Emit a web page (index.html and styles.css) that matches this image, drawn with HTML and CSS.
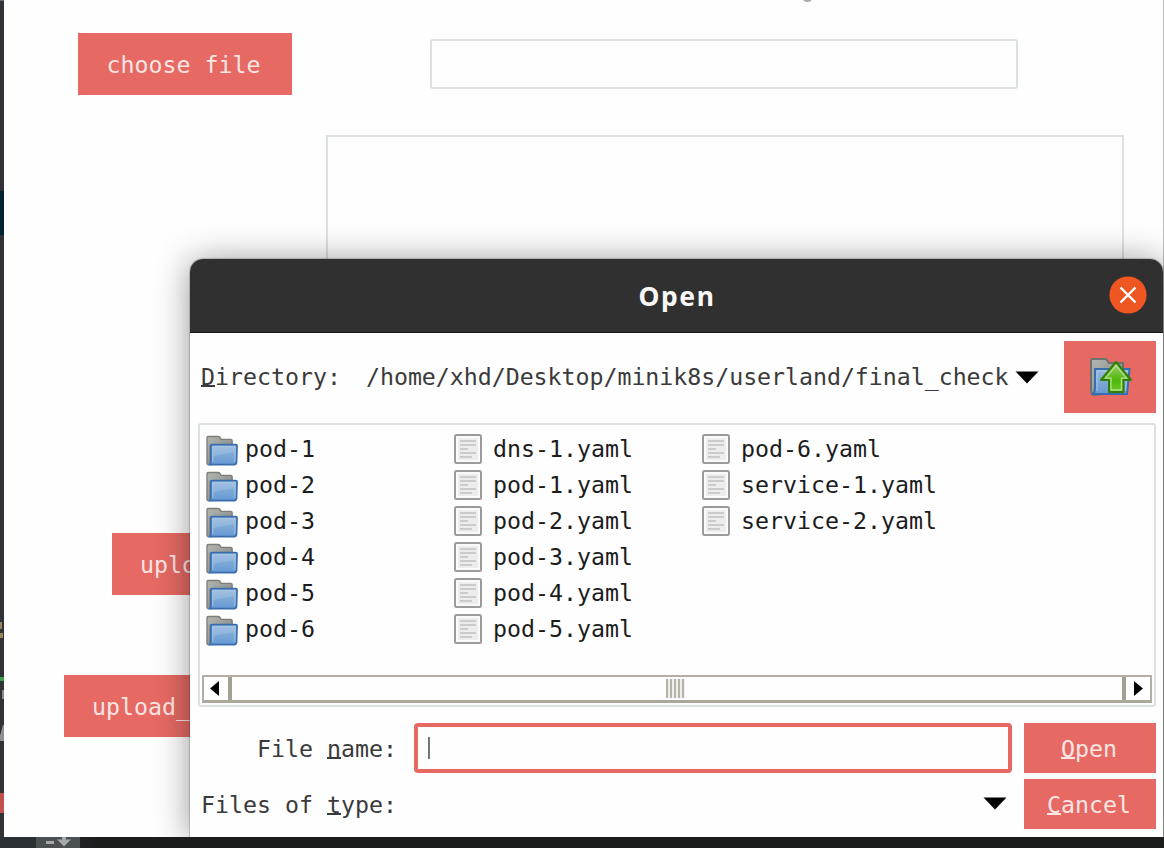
FILE: index.html
```html
<!DOCTYPE html>
<html lang="en">
<head>
<meta charset="utf-8">
<title>Open</title>
<link rel="stylesheet" href="styles.css">
</head>
<body>
<svg class="defs" width="0" height="0">
  <defs>
    <linearGradient id="blue" x1="0" y1="0" x2="0" y2="1"><stop offset="0" stop-color="#96b9dc"/><stop offset="1" stop-color="#6599d2"/></linearGradient>
    <linearGradient id="grey" x1="0" y1="0" x2="1" y2="1"><stop offset="0" stop-color="#b5b8b2"/><stop offset="1" stop-color="#7c7f79"/></linearGradient>
    <linearGradient id="green" x1="0" y1="0" x2="0" y2="1"><stop offset="0" stop-color="#a7d37b"/><stop offset=".6" stop-color="#4fb60c"/><stop offset="1" stop-color="#63cd1c"/></linearGradient>
    <symbol id="folder" viewBox="0 0 34 32">
      <path d="M1.5 29V3Q1.500 1.500 3 1.500H13Q15 1.500 16 4.500H26Q27.500 4.500 27.500 6V28L6 30.500H3Q1.500 30.500 1.500 29Z" fill="url(#grey)" stroke="#7b7f78" stroke-width="1.400"/>
      <path d="M5 10V29" stroke="#666b66" stroke-width="1.600"/>
      <path d="M5.500 11Q5.500 10 6.500 10H31.500Q32.500 10 32.500 11L32 28Q31.700 30.500 29.500 30.500H4.500Q5.500 29 5.500 26Z" fill="url(#blue)" stroke="#386eae" stroke-width="1.800"/>
      <path d="M7.500 27.500V12H30.700L30.200 27.500" fill="none" stroke="#a8c6e6" stroke-width="1"/>
      <path d="M8 12H30V18Q20 18.500 8 22Z" fill="#fff" opacity=".13"/>
    </symbol>
    <symbol id="doc" viewBox="0 0 28 30">
      <rect x="1" y="1" width="26" height="28" rx="1.500" fill="#fafafa" stroke="#9b9b9b" stroke-width="2"/>
      <rect x="4" y="4" width="20" height="22" fill="#ecedec"/>
      <path d="M6 7H22M6 11H22M6 15H14M6 19H22M6 23H18" stroke="#c9ccc9" stroke-width="1.800"/>
    </symbol>
  </defs>
</svg>

<div class="desktop">
  <div class="editor-edge"></div>
  <main class="app">
    <span class="heading-tail"></span>
    <div class="row-choose">
      <button class="btn choose">choose file</button>
      <div class="field"></div>
    </div>
    <div class="preview"></div>
    <button class="btn upload">upload</button>
    <button class="btn upload-all">upload_</button>
  </main>
  <div class="taskbar"><div class="task"><svg width="44" height="11" viewBox="0 0 44 11"><path d="M10 5.500H18" stroke="#a5a8a8" stroke-width="3"/><path d="M21 2.500H35L28 9.500ZM26 0H30V3H26Z" fill="#a5a8a8"/></svg></div></div>
</div>

<section class="dialog">
  <header class="titlebar">
    <h1>Open</h1>
    <svg class="close" width="38" height="38" viewBox="0 0 38 38"><circle cx="19" cy="19" r="18.600" fill="#ee5622"/><path d="M11.500 11.500L26.500 26.500M26.500 11.500L11.500 26.500" stroke="#fff" stroke-width="2.400"/></svg>
  </header>

  <div class="directory">
    <label><u>D</u>irectory:</label>
    <span class="path">/home/xhd/Desktop/minik8s/userland/final_check</span>
    <svg class="caret" width="24" height="13" viewBox="0 0 24 13"><path d="M.5 .5H23.500L12 12.500Z"/></svg>
    <button class="up"><svg width="44" height="40" viewBox="0 0 44 40">
      <path d="M2 35V4Q2 2 4 2H17L20 6H34V35L4 38Z" fill="url(#grey)" stroke="#6e726c" stroke-width="2"/>
      <path d="M6 12H40.500L38 37H4Q6 35 6 31Z" fill="url(#blue)" stroke="#386eae" stroke-width="2"/>
      <path d="M8 34V14H38L36.500 34" fill="none" stroke="#a8c6e6"/>
      <path d="M27 5L42 23H34.500V35H20V23H12Z" fill="url(#green)" stroke="#327d04" stroke-width="2" stroke-linejoin="round"/>
      <path d="M27 8.500L37.500 21.200H32.500V33H22V21.200H16.500Z" fill="none" stroke="#b4df8e" stroke-width="1.300"/>
    </svg></button>
  </div>

  <div class="listing">
    <div class="columns">
      <ul>
        <li><svg class="folder"><use href="#folder"/></svg>pod-1</li>
        <li><svg class="folder"><use href="#folder"/></svg>pod-2</li>
        <li><svg class="folder"><use href="#folder"/></svg>pod-3</li>
        <li><svg class="folder"><use href="#folder"/></svg>pod-4</li>
        <li><svg class="folder"><use href="#folder"/></svg>pod-5</li>
        <li><svg class="folder"><use href="#folder"/></svg>pod-6</li>
      </ul>
      <ul>
        <li><svg class="doc"><use href="#doc"/></svg>dns-1.yaml</li>
        <li><svg class="doc"><use href="#doc"/></svg>pod-1.yaml</li>
        <li><svg class="doc"><use href="#doc"/></svg>pod-2.yaml</li>
        <li><svg class="doc"><use href="#doc"/></svg>pod-3.yaml</li>
        <li><svg class="doc"><use href="#doc"/></svg>pod-4.yaml</li>
        <li><svg class="doc"><use href="#doc"/></svg>pod-5.yaml</li>
      </ul>
      <ul>
        <li><svg class="doc"><use href="#doc"/></svg>pod-6.yaml</li>
        <li><svg class="doc"><use href="#doc"/></svg>service-1.yaml</li>
        <li><svg class="doc"><use href="#doc"/></svg>service-2.yaml</li>
      </ul>
    </div>
    <div class="scrollbar">
      <div class="arrow back"><svg width="9" height="15" viewBox="0 0 9 15"><path d="M9 0V15L0 7.500Z"/></svg></div>
      <div class="thumb"><span class="grip"></span></div>
      <div class="arrow"><svg width="9" height="15" viewBox="0 0 9 15"><path d="M0 0V15L9 7.500Z"/></svg></div>
    </div>
  </div>

  <div class="form">
    <label>File <u>n</u>ame:</label>
    <div class="input"><span class="cursor"></span></div>
    <button class="btn"><u>O</u>pen</button>
    <label>Files of <u>t</u>ype:</label>
    <div class="type"><svg class="caret" width="24" height="13" viewBox="0 0 24 13"><path d="M.5 .5H23.500L12 12.500Z"/></svg></div>
    <button class="btn"><u>C</u>ancel</button>
  </div>
</section>
</body>
</html>
```

FILE: styles.css
```css
* { box-sizing: border-box; }

body {
  margin: 0;
  width: 1164px;
  height: 848px;
  overflow: hidden;
  position: relative;
  background: #1b1c1c;
  color: #3a3a3a;
  font: 23.25px/28px "DejaVu Sans Mono", monospace;
}

.defs { position: absolute; }
svg { display: block; flex: none; }
u { text-decoration: underline 2px; text-underline-offset: 0; text-decoration-skip-ink: none; }

.desktop {
  display: grid;
  grid-template: 837px 11px / 4px 1160px;
  height: 848px;
}

.editor-edge {
  background:
    linear-gradient(#5c7380, #5c7380) 0 0 / 4px 1px,
    linear-gradient(#00212f, #00212f) 0 191px / 4px 44px,
    linear-gradient(#9a8462, #9a8462) 0 622px / 2px 7px,
    linear-gradient(#9a8462, #9a8462) 0 633px / 3px 5px,
    linear-gradient(#3f9f45, #3f9f45) 0 677px / 4px 4px,
    linear-gradient(#85878a, #85878a) 2px 690px / 2px 9px,
    linear-gradient(105deg, #303236 30%, #8d8f92 40%) 0 725px / 4px 16px,
    linear-gradient(#c14f4d, #c14f4d) 0 793px / 4px 20px,
    #303236;
  background-repeat: no-repeat;
}

.app {
  position: relative;
  background: #fefefe;
  border-right: 1px solid #bdbdbd;
  display: flex;
  flex-direction: column;
  align-items: flex-start;
  padding-top: 33px;
}

.heading-tail {
  position: absolute;
  left: 799px;
  top: -5px;
  width: 9px;
  height: 7px;
  border-radius: 50%;
  background: #aaa;
}

.btn {
  border: 0;
  padding: 0;
  background: #e66963;
  color: #fce6e4;
  font: inherit;
}

.row-choose { display: flex; align-items: center; margin-left: 74px; }
.choose { width: 214px; height: 62px; padding: 2px 3px 0 0; }
.field { width: 588px; height: 50px; margin-left: 138px; border: 2px solid #dae1df; border-radius: 3px; }
.preview { width: 798px; height: 350px; margin: 40px 0 0 322px; border: 2px solid #dae1df; }
.upload, .upload-all { height: 62px; padding: 2px 0 0 28px; text-align: left; }
.upload { width: 142px; margin: 48px 0 0 108px; }
.upload-all { width: 238px; margin: 80px 0 0 60px; }

.taskbar { grid-column: 1 / -1; background: linear-gradient(90deg, #2a3033 0 32px, #1b1c1c 100px); padding-left: 36px; }
.task { width: 44px; height: 11px; background: #4b5052; }

.dialog {
  position: absolute;
  left: 190px;
  top: 259px;
  width: 973px;
  height: 578px;
  background: #fefefe;
  border-radius: 13px 13px 0 0;
  box-shadow: 0 0 0 1px rgba(0, 0, 0, .16), 0 2px 34px rgba(0, 0, 0, .42);
  clip-path: inset(-40px -1px 0 -40px);
}

.titlebar {
  height: 74px;
  display: grid;
  grid-template-columns: 1fr auto 1fr;
  align-items: center;
  background: #303030;
  border-bottom: 1px solid #181512;
  border-radius: 13px 13px 0 0;
}
.titlebar h1 {
  grid-column: 2;
  margin: 0 0 0 1px;
  color: #f7f7f7;
  font: bold 26.5px/36px "Noto Sans", sans-serif;
  letter-spacing: 1.5px;
}
.close { justify-self: end; margin: 0 16px 2px 0; }

.directory { display: flex; align-items: center; padding: 8px 7px 0 11px; }
.directory label { width: 165px; }
.path { width: 649px; white-space: nowrap; letter-spacing: -.03px; }
.up {
  width: 92px;
  height: 72px;
  margin-left: 25px;
  padding: 0 0 0 1px;
  border: 0;
  background: #e66963;
  display: flex;
  align-items: center;
  justify-content: center;
}
.caret, .arrow svg { fill: #000; }

.listing {
  margin: 10px 7px 0 8px;
  height: 284px;
  padding: 6px 2px 2px 2px;
  border: 2px solid #dae1df;
  border-radius: 3px;
  display: flex;
  flex-direction: column;
  justify-content: space-between;
  color: #1c1c1c;
}
.columns { display: grid; grid-template-columns: repeat(3, 248px); padding-left: 4px; }
ul { list-style: none; margin: 0; padding: 0; }
li { display: flex; align-items: center; height: 36px; }
.folder { width: 34px; height: 31px; margin: 2px 6px 0 -1px; }
.doc { width: 28px; height: 30px; margin: 0 11px 1px 0; }

.scrollbar {
  height: 28px;
  display: flex;
  border: 2px solid #b3aea3;
  border-bottom: 3px solid #aaa89d;
}
.arrow { width: 24px; display: flex; align-items: center; justify-content: center; }
.back { padding-right: 3px; }
.thumb {
  flex: 1;
  border: solid #a39f92;
  border-width: 0 4px;
  display: flex;
  align-items: center;
  justify-content: center;
  padding-right: 4px;
}
.grip { width: 19px; height: 19px; background: repeating-linear-gradient(90deg, #b7b2a8 0 2px, #efefec 2px 4px); }

.form {
  display: grid;
  grid-template-columns: 213px 598px 132px;
  grid-template-rows: 50px 50px;
  row-gap: 6px;
  align-items: center;
  margin: 16px 0 0 11px;
}
.form label { text-align: right; padding: 2px 17px 0 0; white-space: pre; }
.form .input {
  height: 50px;
  border: 4px solid #e66963;
  border-radius: 4px;
  padding: 10px 10px;
}
.cursor { display: block; width: 2px; height: 22px; background: #777; }
.form .btn { height: 50px; margin-left: 12px; width: 132px; padding: 2px 2px 0 0; }
.type { display: flex; justify-content: flex-end; padding: 0 5px 2px 0; }
```
